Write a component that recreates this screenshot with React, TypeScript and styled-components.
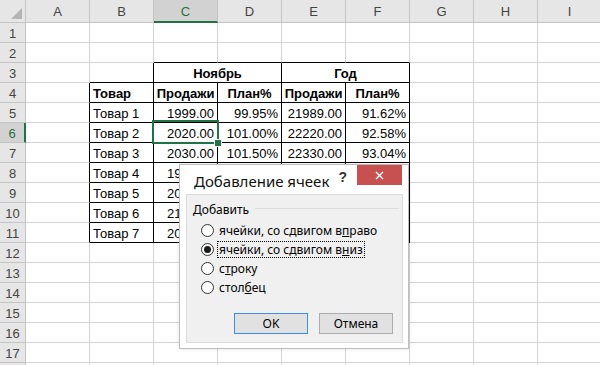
import React from 'react';
import styled, { createGlobalStyle } from 'styled-components';

const GlobalStyle = createGlobalStyle`
  html, body { margin: 0; padding: 0; background: #fff; overflow: hidden; }
  #root { width: 600px; height: 365px; }
`;

const GRID = '#d4d4d4';
const GREEN = '#217346';
const HEAD_BG = '#e6e6e6';
const HEAD_SEL = '#d2d2d2';
const HEAD_LINE = '#c4c4c4';

const COLS = ['A', 'B', 'C', 'D', 'E', 'F', 'G', 'H', 'I'];
const ROW_COUNT = 18;

const Page = styled.div`
  position: relative;
  width: 600px;
  height: 365px;
  overflow: hidden;
  font-family: "Liberation Sans", Arial, sans-serif;
  font-size: 13px;
  color: #000;
`;

const Sheet = styled.div`
  display: grid;
  grid-template-columns: 26px repeat(9, 64px);
  grid-template-rows: 23px repeat(${ROW_COUNT}, 20px);
`;

const Corner = styled.div`
  position: relative;
  box-sizing: border-box;
  background: ${HEAD_BG};
  border-right: 1px solid ${HEAD_LINE};
  border-bottom: 1px solid ${HEAD_LINE};
  &::after {
    content: '';
    position: absolute;
    right: 3px;
    bottom: 3px;
    width: 0;
    height: 0;
    border-left: 11px solid transparent;
    border-bottom: 11px solid #b5b5b5;
  }
`;

const ColHead = styled.div<{ $sel?: boolean }>`
  box-sizing: border-box;
  display: flex;
  align-items: center;
  justify-content: center;
  padding-top: 1px;
  background: ${(p) => (p.$sel ? HEAD_SEL : HEAD_BG)};
  border-right: 1px solid ${HEAD_LINE};
  border-bottom: ${(p) => (p.$sel ? `2px solid ${GREEN}` : `1px solid ${HEAD_LINE}`)};
  color: ${(p) => (p.$sel ? GREEN : '#444')};
  font-size: 13px;
`;

const RowHead = styled.div<{ $sel?: boolean }>`
  box-sizing: border-box;
  display: flex;
  align-items: center;
  justify-content: center;
  padding-top: 1px;
  background: ${(p) => (p.$sel ? HEAD_SEL : HEAD_BG)};
  border-right: ${(p) => (p.$sel ? `2px solid ${GREEN}` : `1px solid ${HEAD_LINE}`)};
  border-bottom: 1px solid ${HEAD_LINE};
  color: ${(p) => (p.$sel ? GREEN : '#444')};
  font-size: 13px;
`;

type Align = 'left' | 'right' | 'center';

const Cell = styled.div<{ $rb?: boolean; $bb?: boolean; $align?: Align; $bold?: boolean; $span?: number }>`
  box-sizing: border-box;
  display: flex;
  align-items: center;
  justify-content: ${(p) => (p.$align === 'right' ? 'flex-end' : p.$align === 'center' ? 'center' : 'flex-start')};
  padding: 2px 3px 0 3px;
  grid-column: span ${(p) => p.$span ?? 1};
  border-right: 1px solid ${(p) => (p.$rb ? '#000' : GRID)};
  border-bottom: 1px solid ${(p) => (p.$bb ? '#000' : GRID)};
  font-weight: ${(p) => (p.$bold ? 'bold' : 'normal')};
  white-space: nowrap;
  overflow: hidden;
`;

const Selection = styled.div`
  position: absolute;
  left: 152px;
  top: 120px;
  width: 67px;
  height: 24px;
  box-sizing: border-box;
  border: 2px solid ${GREEN};
  pointer-events: none;
`;

const FillHandle = styled.div`
  position: absolute;
  left: 214px;
  top: 139px;
  width: 6px;
  height: 6px;
  background: ${GREEN};
  border: 1px solid #fff;
`;

/* ---------- dialog ---------- */

const Dialog = styled.div`
  position: absolute;
  left: 179px;
  top: 164px;
  width: 230px;
  height: 185px;
  box-sizing: border-box;
  background: #fff;
  border: 1px solid #bdbdbd;
  box-shadow: 0 0 4px rgba(0, 0, 0, 0.12);
  display: flex;
  flex-direction: column;
  font-family: "Noto Sans", "Open Sans", sans-serif;
  font-size: 12px;
  color: #000;
`;

const TitleBar = styled.div`
  height: 29px;
  display: flex;
  align-items: flex-start;
  padding-left: 14px;
  padding-right: 6px;
`;

const Title = styled.div`
  flex: 1;
  font-size: 15px;
  line-height: 20px;
  margin-top: 6px;
  white-space: nowrap;
  color: #111;
`;

const Help = styled.div`
  font-family: "Liberation Sans", Arial, sans-serif;
  font-weight: bold;
  font-size: 14px;
  color: #333;
  margin-top: 4px;
  margin-right: 10px;
`;

const Close = styled.div`
  width: 45px;
  height: 20px;
  background: #c75050;
  display: flex;
  align-items: center;
  justify-content: center;
`;

const Body = styled.div`
  flex: 1;
  margin: 0 5px 5px 6px;
  background: #f0f0f0;
  border: 1px solid #dcdcdc;
  display: flex;
  flex-direction: column;
  padding: 6px 3px 8px 6px;
`;

const GroupHeader = styled.div`
  display: flex;
  align-items: center;
  height: 16px;
  gap: 6px;
`;

const GroupLine = styled.div`
  flex: 1;
  height: 0;
  border-top: 1px solid #dcdcdc;
  margin-top: -1px;
`;

const Options = styled.div`
  display: flex;
  flex-direction: column;
  margin-top: 4px;
  padding-left: 8px;
`;

const Option = styled.div`
  height: 19px;
  display: flex;
  align-items: center;
  gap: 4px;
`;

const Radio = styled.div<{ $on?: boolean }>`
  width: 13px;
  height: 13px;
  box-sizing: border-box;
  border-radius: 50%;
  border: 1px solid #333;
  background: #fff;
  display: flex;
  align-items: center;
  justify-content: center;
  &::after {
    content: '';
    display: ${(p) => (p.$on ? 'block' : 'none')};
    width: 7px;
    height: 7px;
    border-radius: 50%;
    background: #1a1a1a;
  }
`;

const Label = styled.span<{ $focus?: boolean }>`
  padding: 0 1px;
  line-height: 15px;
  outline: ${(p) => (p.$focus ? '1px dotted #000' : 'none')};
  white-space: nowrap;
`;

const Buttons = styled.div`
  margin-top: auto;
  display: flex;
  justify-content: flex-end;
  gap: 11px;
  padding-right: 6px;
`;

const Button = styled.div<{ $default?: boolean }>`
  width: 74px;
  height: 21px;
  box-sizing: border-box;
  display: flex;
  align-items: center;
  justify-content: center;
  background: #e1e1e1;
  border: 1px solid ${(p) => (p.$default ? '#3c8fe3' : '#adadad')};
`;

type CellDef = { t?: string; a?: Align; b?: boolean; span?: number };

const dataRows: [string, string, string, string, string][] = [
  ['Товар 1', '1999.00', '99.95%', '21989.00', '91.62%'],
  ['Товар 2', '2020.00', '101.00%', '22220.00', '92.58%'],
  ['Товар 3', '2030.00', '101.50%', '22330.00', '93.04%'],
  ['Товар 4', '1980.00', '99.00%', '21800.00', '90.83%'],
  ['Товар 5', '2050.00', '102.50%', '22450.00', '93.54%'],
  ['Товар 6', '2100.00', '105.00%', '22900.00', '95.42%'],
  ['Товар 7', '2040.00', '102.00%', '22560.00', '94.00%'],
];

function rowCells(r: number): CellDef[] {
  const empty = (): CellDef => ({});
  if (r === 3) {
    return [empty(), empty(), { t: 'Ноябрь', a: 'center', b: true, span: 2 }, { t: 'Год', a: 'center', b: true, span: 2 }, empty(), empty(), empty()];
  }
  if (r === 4) {
    return [
      empty(),
      { t: 'Товар', a: 'left', b: true },
      { t: 'Продажи', a: 'center', b: true },
      { t: 'План%', a: 'center', b: true },
      { t: 'Продажи', a: 'center', b: true },
      { t: 'План%', a: 'center', b: true },
      empty(), empty(), empty(),
    ];
  }
  if (r >= 5 && r <= 11) {
    const d = dataRows[r - 5];
    return [
      empty(),
      { t: d[0], a: 'left' },
      { t: d[1], a: 'right' },
      { t: d[2], a: 'right' },
      { t: d[3], a: 'right' },
      { t: d[4], a: 'right' },
      empty(), empty(), empty(),
    ];
  }
  return COLS.map(() => empty());
}

function borders(r: number, colIdx: number, span: number): { rb: boolean; bb: boolean } {
  // colIdx: 0 = A ... ; rightmost column index covered
  const last = colIdx + span - 1;
  let rb = false;
  let bb = false;
  if (r === 2 && colIdx >= 2 && colIdx <= 5) bb = true;
  if (r === 3) {
    if (colIdx >= 1 && last <= 5) bb = true;
    if (last === 1 || last === 3 || last === 5) rb = true;
  }
  if (r >= 4 && r <= 11) {
    if (colIdx >= 1 && colIdx <= 5) bb = true;
    if (last >= 0 && last <= 5) rb = true;
  }
  return { rb, bb };
}

export default function App() {
  const rows = Array.from({ length: ROW_COUNT }, (_, i) => i + 1);
  return (
    <Page>
      <GlobalStyle />
      <Sheet>
        <Corner />
        {COLS.map((c) => (
          <ColHead key={c} $sel={c === 'C'}>{c}</ColHead>
        ))}
        {rows.map((r) => {
          const cells = rowCells(r);
          let col = 0;
          return (
            <React.Fragment key={r}>
              <RowHead $sel={r === 6}>{r}</RowHead>
              {cells.map((c, i) => {
                const span = c.span ?? 1;
                const { rb, bb } = borders(r, col, span);
                col += span;
                return (
                  <Cell key={i} $rb={rb} $bb={bb} $align={c.a} $bold={c.b} $span={span}>
                    {c.t}
                  </Cell>
                );
              })}
            </React.Fragment>
          );
        })}
      </Sheet>
      <Selection />
      <FillHandle />

      <Dialog>
        <TitleBar>
          <Title>Добавление ячеек</Title>
          <Help>?</Help>
          <Close>
            <svg width="9" height="9" viewBox="0 0 9 9">
              <path d="M1 1 L8 8 M8 1 L1 8" stroke="#fff" strokeWidth="1.4" fill="none" />
            </svg>
          </Close>
        </TitleBar>
        <Body>
          <GroupHeader>
            <span>Добавить</span>
            <GroupLine />
          </GroupHeader>
          <Options>
            <Option>
              <Radio />
              <Label>ячейки, со сдвигом в<u>п</u>раво</Label>
            </Option>
            <Option>
              <Radio $on />
              <Label $focus>ячейки, со сдвигом в<u>н</u>из</Label>
            </Option>
            <Option>
              <Radio />
              <Label>с<u>т</u>року</Label>
            </Option>
            <Option>
              <Radio />
              <Label>стол<u>б</u>ец</Label>
            </Option>
          </Options>
          <Buttons>
            <Button $default>OK</Button>
            <Button>Отмена</Button>
          </Buttons>
        </Body>
      </Dialog>
    </Page>
  );
}
